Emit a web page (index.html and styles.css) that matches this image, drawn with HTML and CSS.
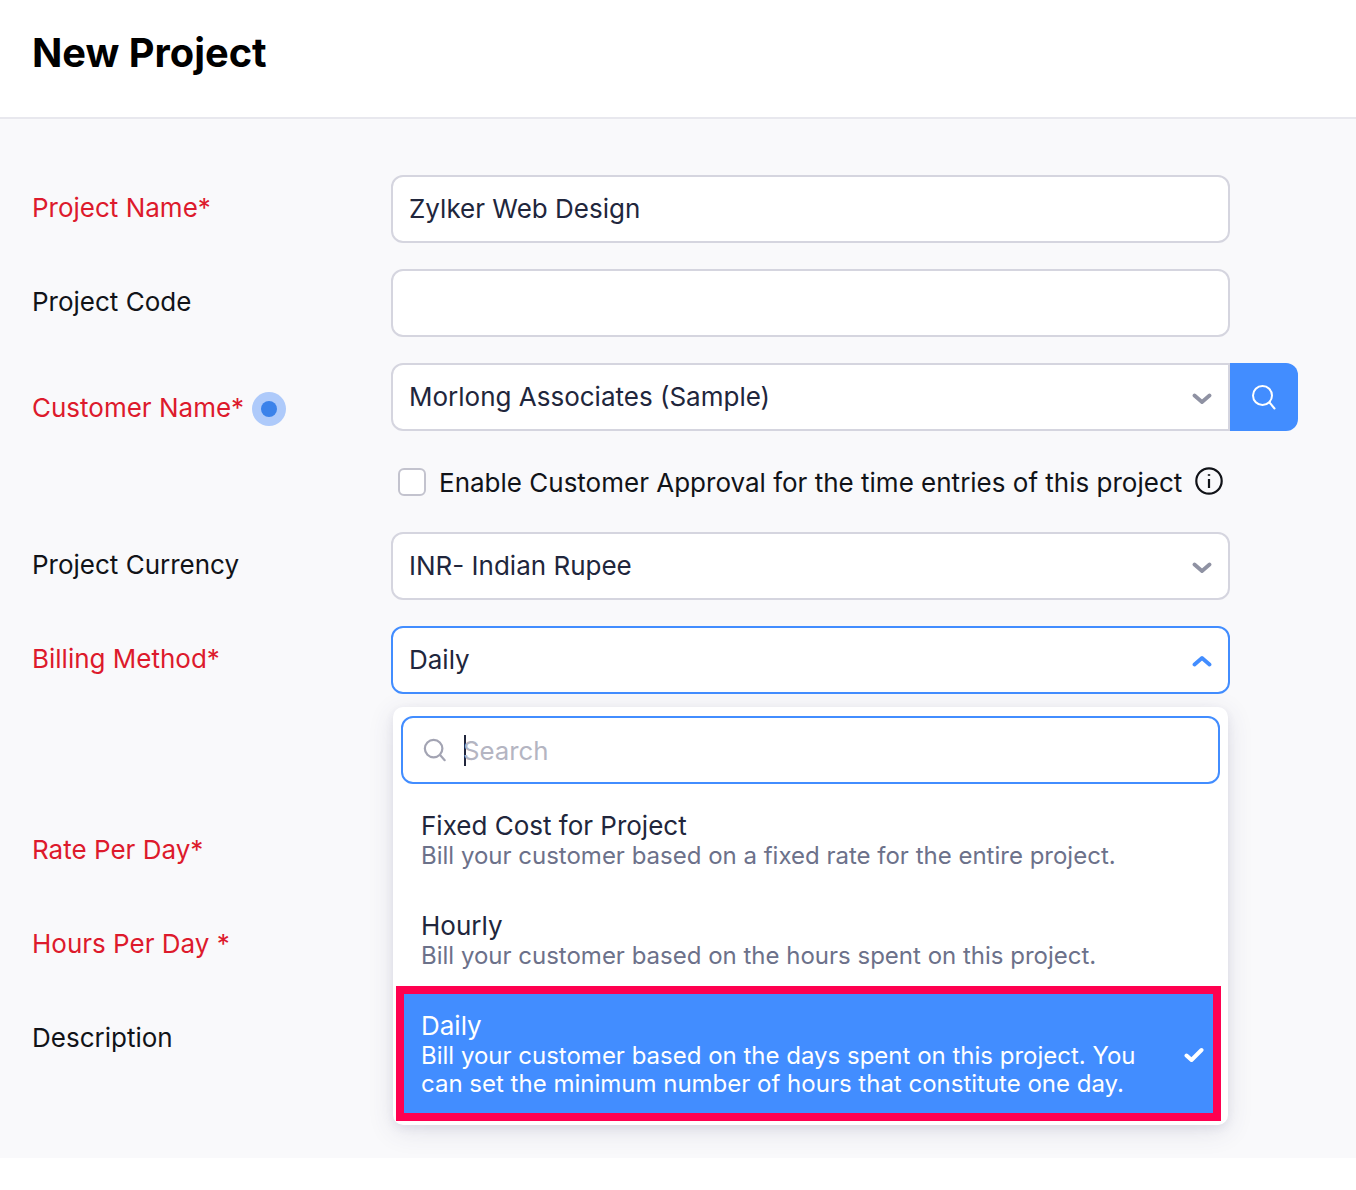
FILE: index.html
```html
<!DOCTYPE html>
<html lang="en">
  <head>
    <meta charset="UTF-8" />
    <meta name="viewport" content="width=device-width, initial-scale=1.0" />
    <title>New Project</title>
    <link rel="stylesheet" href="styles.css">
  </head>
  <body>
    <header class="page_head">
      <h1 class="page_title">New Project</h1>
    </header>

    <form class="project_form">
      <div class="form_row">
        <label class="row_label required">Project Name*</label>
        <div class="field"><div class="input">Zylker Web Design</div></div>
      </div>

      <div class="form_row">
        <label class="row_label">Project Code</label>
        <div class="field"><div class="input"></div></div>
      </div>

      <div class="form_row">
        <label class="row_label required customer_label">Customer Name*<span class="hotspot"><span class="hotspot_dot"></span></span></label>
        <div class="field field_group">
          <div class="input select group_input">
            Morlong Associates (Sample)
            <svg class="chevron" viewBox="0 0 20 12"><path d="M2.5 2.5 10 9l7.5-6.5" /></svg>
          </div>
          <button class="search_button" type="button">
            <svg viewBox="0 0 26 26"><circle cx="11.5" cy="11.5" r="9.5" /><path d="m18.5 18.5 5 6" /></svg>
          </button>
        </div>
      </div>

      <div class="approval_row">
        <span class="checkbox"></span>
        <span class="approval_text">Enable Customer Approval for the time entries of this project</span>
        <svg class="info_icon" viewBox="0 0 28 28"><circle cx="14" cy="14" r="12.7" /><path d="M14 12v9" /><path class="info_dot" d="M14 7.2v1.6" /></svg>
      </div>

      <div class="form_row">
        <label class="row_label">Project Currency</label>
        <div class="field">
          <div class="input select">
            INR- Indian Rupee
            <svg class="chevron" viewBox="0 0 20 12"><path d="M2.5 2.5 10 9l7.5-6.5" /></svg>
          </div>
        </div>
      </div>

      <div class="form_row billing_row">
        <label class="row_label required">Billing Method*</label>
        <div class="field">
          <div class="input select open">
            Daily
            <svg class="chevron" viewBox="0 0 20 12"><path d="M2.5 9.5 10 3l7.5 6.5" /></svg>
          </div>

          <div class="menu">
            <div class="menu_search">
              <svg class="menu_search_icon" viewBox="0 0 26 26"><circle cx="11.5" cy="11.5" r="9.5" /><path d="m18.5 18.5 5 5.5" /></svg>
              <span class="caret"></span>
              <span class="placeholder">Search</span>
            </div>
            <ul class="options">
              <li class="option">
                <div class="option_title">Fixed Cost for Project</div>
                <div class="option_desc">Bill your customer based on a fixed rate for the entire project.</div>
              </li>
              <li class="option">
                <div class="option_title">Hourly</div>
                <div class="option_desc">Bill your customer based on the hours spent on this project.</div>
              </li>
              <li class="option selected">
                <div class="option_title">Daily</div>
                <div class="option_desc">Bill your customer based on the days spent on this project. You can set the minimum number of hours that constitute one day.</div>
                <svg class="check" viewBox="0 0 20 16"><path d="M2.5 8.5 7.5 13 17.5 3" /></svg>
              </li>
            </ul>
          </div>
        </div>
      </div>

      <!-- these three fields sit behind the open menu -->
      <div class="form_row covered_row">
        <label class="row_label required">Rate Per Day*</label>
      </div>

      <div class="form_row covered_row">
        <label class="row_label required">Hours Per Day *</label>
      </div>

      <div class="form_row covered_row">
        <label class="row_label">Description</label>
      </div>
    </form>
  </body>
</html>
```

FILE: styles.css
```css
* {
  box-sizing: border-box;
}
body {
  margin: 0;
  background: #ffffff;
  color: #21263c;
  font-family: Inter, "Liberation Sans", sans-serif;
  font-size: 26px;
}
.page_head {
  height: 119px;
  padding: 28px 32px 0;
  border-bottom: 2px solid #e8e8ee;
}
.page_title {
  margin: 0;
  color: #000000;
  font-size: 39.8px;
  font-weight: 700;
  line-height: 50px;
}
.project_form {
  height: 1039px;
  padding: 56px 0 0 32px;
  overflow: hidden;
  background: #f9f9fb;
}
.form_row {
  display: flex;
  margin-bottom: 26px;
}
.billing_row {
  margin-bottom: 122px;
}
.covered_row {
  height: 68px;
}
.row_label {
  display: block;
  width: 359px;
  flex: none;
  padding-top: 16px;
  color: #111318;
  line-height: 34px;
}
.required {
  color: #dd1a2c;
}
.covered_row .row_label {
  padding-top: 17px;
}
.customer_label {
  display: flex;
  align-items: flex-start;
  padding-top: 28px;
}
.hotspot {
  display: flex;
  justify-content: center;
  align-items: center;
  width: 34px;
  height: 34px;
  margin-top: 1px;
  margin-left: 8px;
  border-radius: 50%;
  background: #aecafa;
}
.hotspot_dot {
  width: 16px;
  height: 16px;
  border-radius: 50%;
  background: #3b82ea;
}
.field {
  position: relative;
  width: 839px;
  flex: none;
}
.field_group {
  display: flex;
  width: 907px;
}
.input {
  position: relative;
  height: 68px;
  padding: 0 60px 0 16px;
  border: 2px solid #d5d5df;
  border-radius: 12px;
  background: #ffffff;
  line-height: 63px;
}
.group_input {
  width: 839px;
  border-radius: 12px 0 0 12px;
}
.search_button {
  width: 68px;
  height: 68px;
  padding: 0;
  border: 0;
  border-radius: 0 12px 12px 0;
  background: #428dff;
}
.search_button svg {
  display: block;
  width: 26px;
  height: 26px;
  margin: 0 auto;
  fill: none;
  stroke: #ffffff;
  stroke-width: 2;
  stroke-linecap: round;
}
.chevron {
  position: absolute;
  top: 28px;
  right: 16px;
  width: 20px;
  height: 12px;
  fill: none;
  stroke: #8f92a3;
  stroke-width: 3.8;
  stroke-linecap: round;
  stroke-linejoin: round;
}
.open {
  border-color: #428dff;
}
.open .chevron {
  top: 27px;
  stroke: #428dff;
}
.approval_row {
  display: flex;
  align-items: center;
  height: 49px;
  margin-left: 366px;
  margin-bottom: 26px;
  padding-top: 1px;
  color: #111318;
}
.checkbox {
  width: 28px;
  height: 28px;
  margin-right: 13px;
  border: 2px solid #c3c3ce;
  border-radius: 6px;
  background: #ffffff;
}
.info_icon {
  width: 28px;
  height: 28px;
  margin-left: 13px;
  margin-bottom: 3px;
  fill: none;
  stroke: #111318;
  stroke-width: 2.2;
}
.info_dot {
  stroke-width: 2.4;
}
.menu {
  position: absolute;
  top: 81px;
  left: 2px;
  right: 2px;
  z-index: 2;
  height: 418px;
  padding: 9px 8px 12px;
  border-radius: 10px;
  background: #ffffff;
  box-shadow: 0 3px 8px rgba(60, 60, 110, 0.08), 0 6px 26px rgba(60, 60, 110, 0.13);
}
.menu_search {
  display: flex;
  align-items: center;
  height: 68px;
  padding-left: 20px;
  border: 2px solid #428dff;
  border-radius: 12px;
  color: #b4b5c2;
}
.menu_search_icon {
  width: 24px;
  height: 24px;
  fill: none;
  stroke: #a3a4b3;
  stroke-width: 2.4;
  stroke-linecap: round;
}
.caret {
  width: 2px;
  height: 31px;
  margin-left: 17px;
  background: #21263c;
}
.placeholder {
  margin-left: -3px;
  font-size: 25.8px;
}
.options {
  margin: 11px 7px 0 3px;
  padding: 0;
  list-style: none;
}
.option {
  position: relative;
  margin-bottom: 10px;
  padding: 15px 70px 15px 17px;
}
.option_title {
  line-height: 32px;
}
.option_desc {
  color: #6c718a;
  font-size: 24px;
  line-height: 28px;
}
.selected {
  margin-top: -1px;
  padding-top: 16px;
  background: #428dff;
  outline: 8px solid #ff0050;
  color: #ffffff;
}
.selected .option_desc {
  color: #ffffff;
}
.check {
  position: absolute;
  top: 53px;
  right: 9px;
  width: 20px;
  height: 16px;
  fill: none;
  stroke: #ffffff;
  stroke-width: 4;
  stroke-linecap: round;
  stroke-linejoin: round;
}
```
